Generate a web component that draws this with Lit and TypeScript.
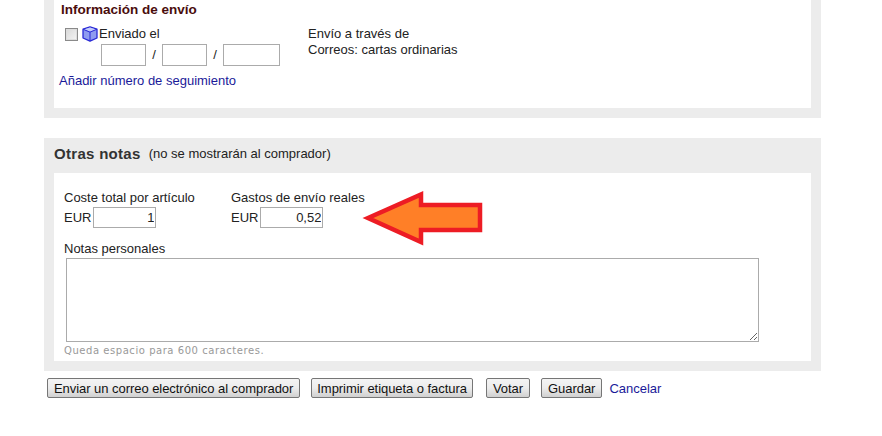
import { LitElement, html, css } from "lit";
import { customElement } from "lit/decorators.js";

@customElement("app-root")
export class AppRoot extends LitElement {
  static styles = css`
    :host { display: block; position: relative; width: 882px; height: 436px; overflow: hidden; background: #fff;
      font-family: "Liberation Sans", Arial, sans-serif; font-size: 13px; line-height: 16px; color: #222; }
    .page { display: flex; flex-direction: column; padding-left: 44px; width: 777px; }
    .panel { background: #ececec; padding: 0 10px 10px; }
    .inner { background: #fff; }
    .ship { height: 108px; box-sizing: border-box; padding: 2px 7px 0 5px; display: flex; flex-direction: column; }
    .ship h3 { margin: 0; padding-left: 2px; font-size: 13.5px; line-height: 16px; color: #4a0d0d; font-weight: bold; }
    .shiprow { display: flex; margin-top: 8px; }
    .sent { width: 249px; padding-left: 6px; box-sizing: border-box; }
    .sentline { display: flex; align-items: center; height: 16px; }
    .sentline span:last-child { margin-left: 1px; }
    .check { box-sizing: border-box; width: 13px; height: 13px; border: 1px solid #8a8a8a; box-shadow: inset 0 0 0 1px #ddd; background: linear-gradient(135deg,#d8d8d8,#f4f4f4); margin: 0 4px 0 0; }
    .dates { display: flex; align-items: center; margin: 2px 0 0 36px; }
    .dates .slash { width: 16px; text-align: center; }
    input.t { box-sizing: border-box; height: 22px; border: 1px solid #ababab; background: #fff; margin: 0; padding: 0 3px; font: inherit; color: #222; text-align: right; display: block; }
    .d1 { width: 45px; } .d3 { width: 57px; }
    a { color: #1a1a99; text-decoration: none; }
    .track { display: block; margin-top: 7px; }
    .gap { height: 20px; }
    .notes { height: 233px; box-sizing: border-box; }
    .nh { height: 35px; display: flex; align-items: center; gap: 8px; padding-bottom: 4px; box-sizing: border-box; }
    .nh b { font-size: 15px; letter-spacing: .3px; color: #333; }
    .ni { height: 188px; box-sizing: border-box; padding: 17px 10px 0; }
    .costs { display: flex; gap: 36px; }
    .cost { width: 131px; white-space: nowrap; }
    .cost .r { display: flex; align-items: center; margin-top: 1px; }
    .cost input { width: 63px; height: 21px; padding: 0 1px; margin-left: 2px; }
    .lab { display: block; margin-top: 13px; }
    .ta { display: block; box-sizing: border-box; width: 693px; height: 84px; margin: 1px 0 0 2px; border: 1px solid #ababab; background: #fff; resize: both; padding: 2px; font: inherit; }
    .left { font-family: "DejaVu Sans", sans-serif; font-size: 10px; line-height: 12px; letter-spacing: .55px; color: #999; margin-top: 3px; }
    .actions { display: flex; align-items: center; gap: 11px; margin: 7px 0 0 3px; }
    button { height: 20px; box-sizing: border-box; padding: 1px 6px 0; border: 1px solid #767676; border-radius: 2px; background: linear-gradient(#f4f4f4,#ececec 50%,#d0d0d0); font: inherit; letter-spacing: -.05px; color: #111; white-space: nowrap; }
    button.print { padding: 1px 5px 0; }
    .vote { margin-left: 2px; }
    .cancel { margin: 2px 0 0 -4px; }
    .arrow { position: absolute; left: 355px; top: 185px; }
  `;

  render() {
    return html`
      <div class="page">
        <div class="panel">
          <div class="inner ship">
            <h3>Información de envío</h3>
            <div class="shiprow">
              <div class="sent">
                <div class="sentline">
                  <span class="check"></span>
                  <svg width="16" height="16" viewBox="0 0 16 16">
                    <path d="M8 .8 15 3.2V12L8 15.2 1 12V3.2Z" fill="#8f9cf0" stroke="#2a2ad6" stroke-width="1.3" stroke-linejoin="round"/>
                    <path d="M2 3.4 8 1.5 14 3.4 8 5.6Z" fill="#c4ccfa"/>
                    <path d="M1 3.2 8 6.2 15 3.2M8 6.2V15" fill="none" stroke="#2a2ad6" stroke-width="1"/>
                  </svg>
                  <span>Enviado el</span>
                </div>
                <div class="dates">
                  <input class="t d1"><span class="slash">/</span><input class="t d1"><span class="slash">/</span><input class="t d3">
                </div>
              </div>
              <div>Envío a través de<br>Correos: cartas ordinarias</div>
            </div>
            <a class="track" href="#">Añadir número de seguimiento</a>
          </div>
        </div>
        <div class="gap"></div>
        <div class="panel notes">
          <div class="nh"><b>Otras notas</b><span>(no se mostrarán al comprador)</span></div>
          <div class="inner ni">
            <div class="costs">
              <div class="cost"><div>Coste total por artículo</div><div class="r">EUR<input class="t" value="1"></div></div>
              <div class="cost"><div>Gastos de envío reales</div><div class="r">EUR<input class="t" value="0,52"></div></div>
            </div>
            <label class="lab">Notas personales</label>
            <textarea class="ta"></textarea>
            <div class="left">Queda espacio para 600 caracteres.</div>
          </div>
        </div>
        <div class="actions">
          <button>Enviar un correo electrónico al comprador</button>
          <button class="print">Imprimir etiqueta o factura</button>
          <button class="vote">Votar</button>
          <button>Guardar</button>
          <a class="cancel" href="#">Cancelar</a>
        </div>
      </div>
      <svg class="arrow" width="135" height="68" viewBox="355 185 135 68">
        <path d="M368 218 421 194.5V205H480V230H421V242Z" fill="#ff7f27" stroke="#ed1c24" stroke-width="4.5" stroke-linejoin="miter" stroke-miterlimit="4"/>
      </svg>
    `;
  }
}
